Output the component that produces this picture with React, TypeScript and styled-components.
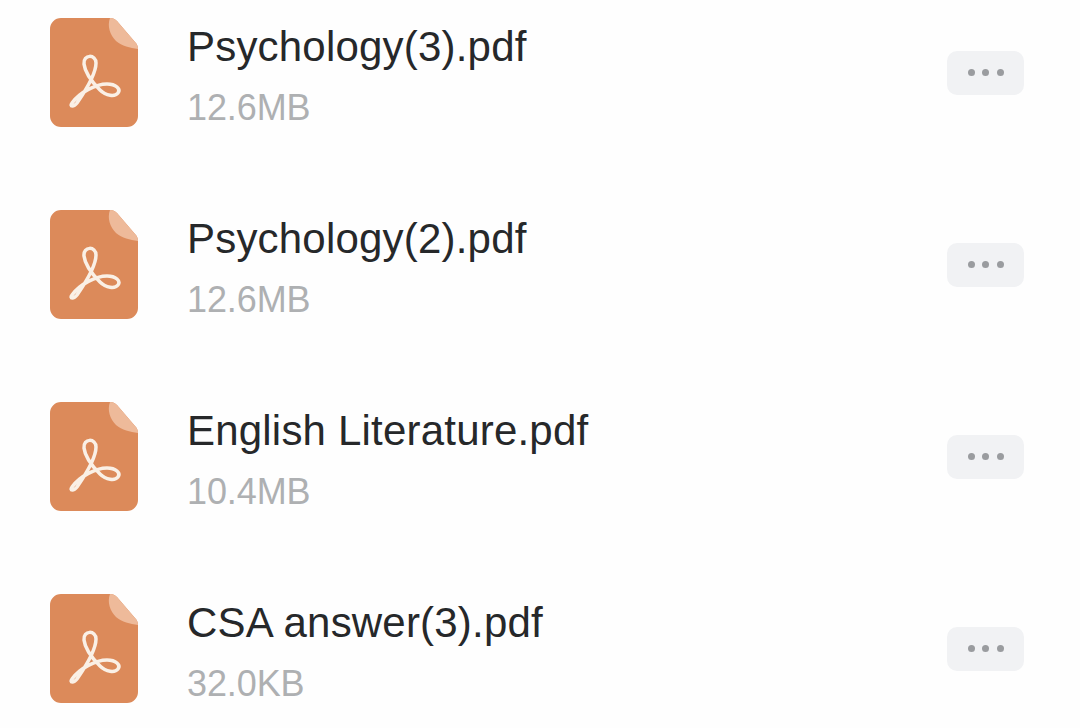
import React from "react";
import styled, { createGlobalStyle } from "styled-components";

const Global = createGlobalStyle`
  html, body { margin: 0; padding: 0; background: #fefefe; }
  body { width: 1080px; height: 728px; overflow: hidden; font-family: "Liberation Sans", Arial, sans-serif; }
`;

const List = styled.ul`
  list-style: none;
  margin: 0;
  padding: 18px 56px 0 50px;
  display: flex;
  flex-direction: column;
  gap: 83px;
`;

const Row = styled.li`
  display: flex;
  align-items: center;
  height: 109px;
`;

const FileIcon = styled.svg`
  width: 88px;
  height: 109px;
  flex: none;
  filter: blur(0.6px);
`;

const Info = styled.div`
  flex: 1;
  margin-left: 50px;
  display: flex;
  flex-direction: column;
  gap: 17px;
  margin-top: 5px;
`;

const Name = styled.div`
  font-size: 42px;
  line-height: 48px;
  color: #26282a;
  letter-spacing: 0.2px;
  margin-left: -1px;
`;

const Size = styled.div`
  font-size: 36px;
  line-height: 40px;
  color: #aeb0b2;
  letter-spacing: -0.1px;
  margin-left: -1px;
`;

const MoreButton = styled.button`
  width: 77px;
  height: 44px;
  padding: 0;
  border: 0;
  border-radius: 10px;
  background: #f1f2f4;
  display: flex;
  align-items: center;
  justify-content: center;
  gap: 7.5px;
  flex: none;
`;

const Dot = styled.span`
  width: 7px;
  height: 7px;
  border-radius: 50%;
  background: #9a9c9f;
`;

const PdfIcon = () => (
  <FileIcon viewBox="0 0 88 109">
    <path d="M11 0H60C63 0 65 1 67 3L85 24C87 26 88 28 88 31V98a11 11 0 0 1-11 11H11A11 11 0 0 1 0 98V11A11 11 0 0 1 11 0Z" fill="#dc8a5a" />
    <path d="M60 0C63 0 65 1 67 3L85 24C87 26 88 28 88 31C80 30 72 28 66 23C60 17 57 8 60 0Z" fill="#eeba9a" />
    <path
      d="M22 85C30 74 46 66 57 66C66 66 71 71 68 75C65 79 56 78 50 72C44 66 35 55 34 46C33 36 46 36 46 45C46 55 36 72 27 85C24 89 19 89 22 85Z"
      fill="none"
      stroke="#faf0e6"
      strokeWidth="3.5"
      strokeLinecap="round"
      strokeLinejoin="round"
    />
  </FileIcon>
);

const files = [
  { name: "Psychology(3).pdf", size: "12.6MB" },
  { name: "Psychology(2).pdf", size: "12.6MB" },
  { name: "English Literature.pdf", size: "10.4MB" },
  { name: "CSA answer(3).pdf", size: "32.0KB" },
];

export default function App() {
  return (
    <>
      <Global />
      <List>
        {files.map((f) => (
          <Row key={f.name}>
            <PdfIcon />
            <Info>
              <Name>{f.name}</Name>
              <Size>{f.size}</Size>
            </Info>
            <MoreButton aria-label="More">
              <Dot />
              <Dot />
              <Dot />
            </MoreButton>
          </Row>
        ))}
      </List>
    </>
  );
}
